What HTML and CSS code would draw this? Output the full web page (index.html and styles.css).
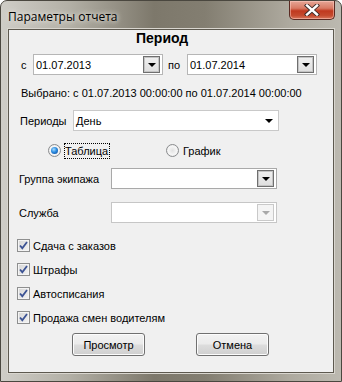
FILE: index.html
```html
<!DOCTYPE html>
<html lang="ru">
<head>
    <meta charset="UTF-8">
    <title>Параметры отчета</title>
    <link rel="stylesheet" href="styles.css">
</head>
<body>
    <div class="window">
        <div class="titlebar">
            <span class="title">Параметры отчета</span>
            <div class="close">
                <svg width="16" height="12" viewBox="0 0 16 12">
                    <path d="M3 1.5 L13 10.5 M13 1.5 L3 10.5" stroke="#3a2a28" stroke-width="4.2" stroke-linecap="square"/>
                    <path d="M3 1.5 L13 10.5 M13 1.5 L3 10.5" stroke="#ffffff" stroke-width="2.4" stroke-linecap="square"/>
                </svg>
            </div>
        </div>

        <div class="client">
            <div class="heading">Период</div>

            <div class="row dates">
                <span class="lbl-c">с</span>
                <div class="picker">
                    <span class="value">01.07.2013</span>
                    <span class="drop"><i class="tri"></i></span>
                </div>
                <span class="lbl-po">по</span>
                <div class="picker">
                    <span class="value">01.07.2014</span>
                    <span class="drop"><i class="tri"></i></span>
                </div>
            </div>

            <div class="row chosen">Выбрано: с 01.07.2013 00:00:00 по 01.07.2014 00:00:00</div>

            <div class="row periods">
                <span class="lbl-periods">Периоды</span>
                <div class="combo flat">
                    <span class="value">День</span>
                    <i class="tri"></i>
                </div>
            </div>

            <div class="row radios">
                <label class="radio-item first">
                    <span class="radio checked"></span>
                    <span class="focus">Таблица</span>
                </label>
                <label class="radio-item">
                    <span class="radio"></span>
                    <span>График</span>
                </label>
            </div>

            <div class="row crew">
                <span class="lbl-wide">Группа экипажа</span>
                <div class="combo boxed">
                    <span class="drop"><i class="tri"></i></span>
                </div>
            </div>

            <div class="row service">
                <span class="lbl-wide">Служба</span>
                <div class="combo boxed disabled">
                    <span class="drop"><i class="tri"></i></span>
                </div>
            </div>

            <div class="checks">
                <label class="check-item"><span class="checkbox"><svg width="11" height="11" viewBox="0 0 11 11"><path d="M2 5.5 L4.3 8.2 L9 2" fill="none" stroke="#3c5394" stroke-width="1.8"/></svg></span>Сдача с заказов</label>
                <label class="check-item"><span class="checkbox"><svg width="11" height="11" viewBox="0 0 11 11"><path d="M2 5.5 L4.3 8.2 L9 2" fill="none" stroke="#3c5394" stroke-width="1.8"/></svg></span>Штрафы</label>
                <label class="check-item"><span class="checkbox"><svg width="11" height="11" viewBox="0 0 11 11"><path d="M2 5.5 L4.3 8.2 L9 2" fill="none" stroke="#3c5394" stroke-width="1.8"/></svg></span>Автосписания</label>
                <label class="check-item"><span class="checkbox"><svg width="11" height="11" viewBox="0 0 11 11"><path d="M2 5.5 L4.3 8.2 L9 2" fill="none" stroke="#3c5394" stroke-width="1.8"/></svg></span>Продажа смен водителям</label>
            </div>

            <div class="buttons">
                <button class="btn">Просмотр</button>
                <button class="btn">Отмена</button>
            </div>
        </div>
    </div>
</body>
</html>
```

FILE: styles.css
```css
/* Сброс */
* {
    margin: 0;
    padding: 0;
    box-sizing: border-box;
}

body {
    background: #ffffff;
    font-family: 'Liberation Sans', Arial, sans-serif;
    font-size: 11px;
    color: #000;
}

/* Окно с рамкой Aero */
.window {
    width: 342px;
    height: 382px;
    padding: 0 7px 8px 7px;
    border-radius: 7px 7px 0 0;
    border: 1px solid #4a473f;
    background: linear-gradient(90deg, #cfcdc7 0%, #b3b0a6 20%, #7d786b 45%, #837e71 60%, #aeaa9f 85%, #bcb9b0 100%);
    display: flex;
    flex-direction: column;
}

.titlebar {
    height: 28px;
    display: flex;
    justify-content: space-between;
    align-items: flex-start;
}

.title {
    font-family: 'Open Sans', 'Noto Sans', sans-serif;
    font-size: 12px;
    margin-top: 7px;
    padding-left: 0;
    color: #000;
    text-shadow: 0 0 6px #e6e4de, 0 0 4px #e6e4de;
}

.close {
    width: 46px;
    height: 19px;
    margin-right: -1px;
    border: 1px solid #5a2a22;
    border-top: none;
    border-radius: 0 0 5px 5px;
    background: linear-gradient(180deg, #e6a697 0%, #d87a64 40%, #c0391f 55%, #c44a2e 80%, #d8775c 100%);
    box-shadow: inset 0 0 0 1px rgba(255, 210, 200, 0.5);
    display: flex;
    justify-content: center;
    align-items: center;
}

/* Клиентская область */
.client {
    flex: 1;
    background: #f0f0f0;
    border: 1px solid #5d594f;
    box-shadow: 0 0 0 1px #d9d6cf;
}

.row {
    display: flex;
    align-items: center;
}

.heading {
    height: 17px;
    line-height: 17px;
    padding-left: 127px;
    font-size: 14px;
    font-weight: bold;
}

/* Даты */
.dates {
    margin-top: 7px;
    padding-left: 12px;
}

.lbl-c {
    width: 12px;
}

.lbl-po {
    margin-left: 5px;
    width: 19px;
}

.picker {
    width: 130px;
    height: 21px;
    background: #fff;
    border: 1px solid #b6b6b6;
    display: flex;
    align-items: center;
    justify-content: space-between;
    padding: 0 2px 0 2px;
}

.drop {
    width: 17px;
    height: 17px;
    border: 1px solid #6f6f6f;
    box-shadow: inset 0 0 0 1px #c4c4c4;
    background: linear-gradient(180deg, #f0f0f0, #dedede);
    display: flex;
    justify-content: center;
    align-items: center;
}

.tri {
    width: 0;
    height: 0;
    border-left: 4px solid transparent;
    border-right: 4px solid transparent;
    border-top: 4px solid #000;
    margin-top: 1px;
}

.chosen {
    margin-top: 11px;
    height: 14px;
    padding-left: 12px;
}

/* Периоды */
.periods {
    margin-top: 10px;
    padding-left: 11px;
}

.lbl-periods {
    width: 53px;
}

.combo {
    height: 21px;
    background: #fff;
    display: flex;
    align-items: center;
}

.combo.flat {
    width: 206px;
    border: 1px solid #c9c9c9;
    justify-content: space-between;
    padding: 0 5px 0 2px;
}

.combo.boxed {
    width: 166px;
    border: 1px solid #a9a9a9;
    justify-content: flex-end;
    padding-right: 2px;
}

.combo.disabled {
    border-color: #c6c6c6;
}

.combo.disabled .drop {
    border-color: #c9c9c9;
    box-shadow: none;
    background: #f4f4f4;
}

.combo.disabled .tri {
    border-top-color: #a8a8a8;
}

/* Переключатели */
.radios {
    margin-top: 12px;
    height: 15px;
    padding-left: 39px;
}

.radio-item {
    display: flex;
    align-items: center;
}

.radio-item.first {
    width: 118px;
}

.radio {
    width: 13px;
    height: 13px;
    border-radius: 50%;
    border: 1px solid #8a8c8e;
    background: radial-gradient(circle at 50% 50%, #e2e2e2 0%, #f6f6f6 55%, #dadada 100%);
    margin-right: 4px;
    position: relative;
}

.radio.checked::after {
    content: "";
    position: absolute;
    left: 2px;
    top: 2px;
    width: 7px;
    height: 7px;
    border-radius: 50%;
    background: radial-gradient(circle at 40% 35%, #a6dcff 0%, #2a8be0 45%, #0c3f8f 100%);
}

.focus {
    outline: 1px dotted #000;
    outline-offset: 0;
    padding: 0 1px 0 0;
    line-height: 14px;
}

/* Группа и служба */
.crew {
    margin-top: 10px;
    padding-left: 10px;
}

.service {
    margin-top: 13px;
    padding-left: 10px;
}

.lbl-wide {
    width: 92px;
}

/* Флажки */
.checks {
    margin-top: 16px;
    padding-left: 8px;
    display: flex;
    flex-direction: column;
    gap: 11px;
}

.check-item {
    display: flex;
    align-items: center;
    height: 13px;
}

.checkbox {
    width: 13px;
    height: 13px;
    border: 1px solid #8e8f8f;
    background: linear-gradient(135deg, #d6d6d6, #f4f4f4);
    box-shadow: inset 0 0 0 1px #f4f4f4;
    margin-right: 3px;
    display: flex;
    justify-content: center;
    align-items: center;
}

/* Кнопки */
.buttons {
    margin-top: 9px;
    padding-left: 63px;
    display: flex;
    gap: 51px;
}

.btn {
    width: 73px;
    height: 23px;
    font-family: 'Liberation Sans', Arial, sans-serif;
    font-size: 11px;
    color: #000;
    border: 1px solid #707070;
    border-radius: 3px;
    background: linear-gradient(180deg, #f2f2f2 0%, #ebebeb 48%, #dddddd 52%, #cfcfcf 100%);
    box-shadow: inset 0 0 0 1px #fcfcfc;
}
```
